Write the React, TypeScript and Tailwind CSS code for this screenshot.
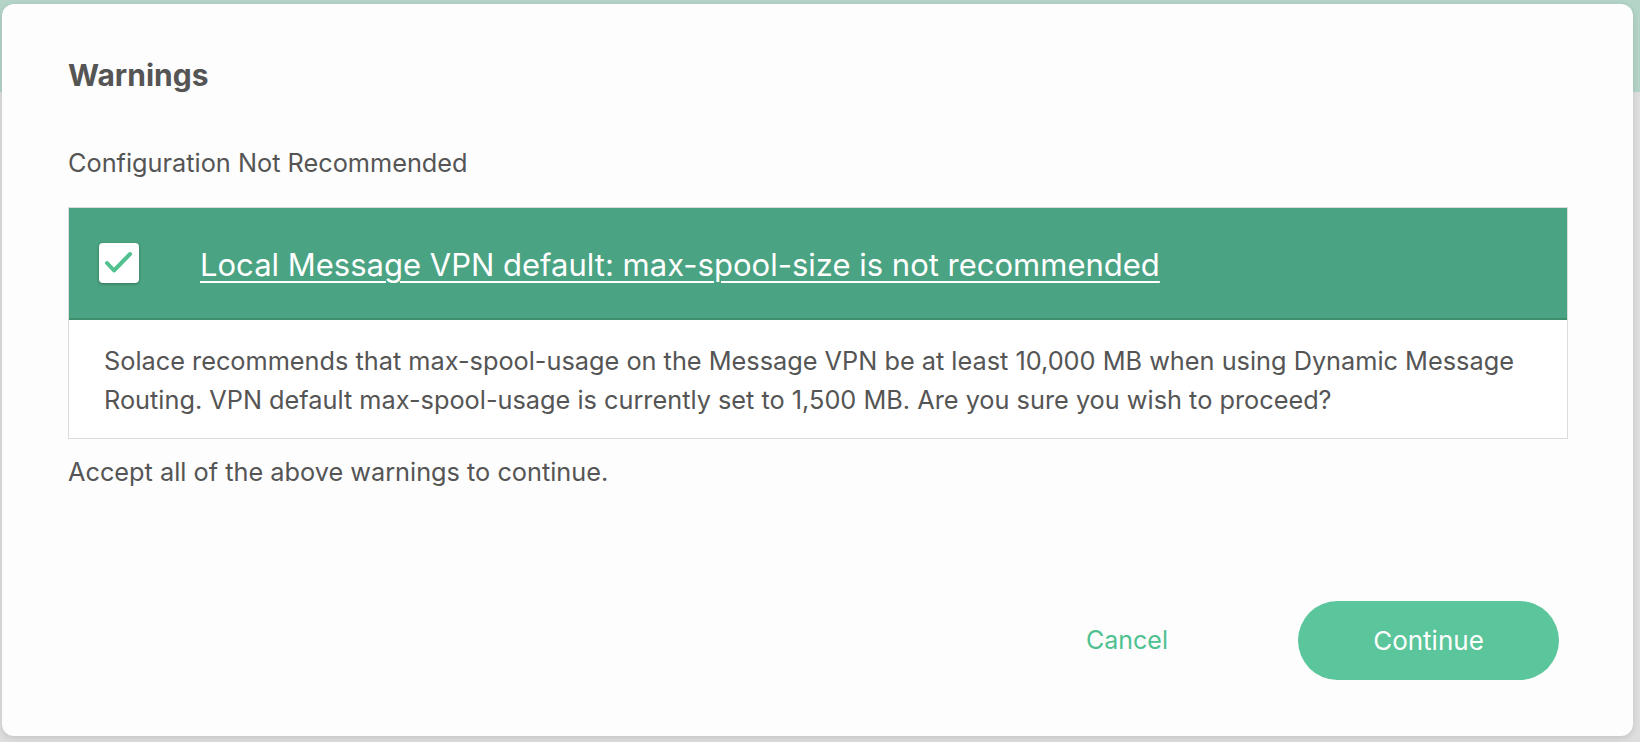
import { useState } from "react";

export default function App() {
  const [accepted, setAccepted] = useState(true);

  return (
    <div className="h-[742px] w-[1640px] overflow-hidden bg-[linear-gradient(to_bottom,#b4d4c7_0,#b4d4c7_92px,#dedede_92px)] pl-[2px] pr-[7px] pt-[4px] pb-[6px] font-['Inter','Liberation_Sans',sans-serif]">
      <div className="flex h-full flex-col rounded-[12px] bg-[#fdfdfd] pl-[66px] pr-[65px] pt-[53px] shadow-[0_2px_6px_rgba(0,0,0,0.12)]">
        <h2 className="text-[30px] font-bold leading-[36px] text-[#555555]">Warnings</h2>

        <p className="mt-[54px] text-[25.3px] leading-[32px] text-[#555555]">Configuration Not Recommended</p>

        <div className="mt-[28px] border border-[#dcdcdc]">
          <div className="flex h-[112px] items-center border-b-2 border-[#3f8e6e] bg-[#4aa382] pl-[30px]">
            <button
              onClick={() => setAccepted(!accepted)}
              className="flex h-[40px] w-[40px] items-center justify-center rounded-[4px] bg-white shadow-[0_1px_3px_rgba(0,0,0,0.3)]"
            >
              {accepted && (
                <svg width="40" height="40" viewBox="0 0 40 40" fill="none">
                  <path d="M8 20 L15 27.5 L31 11" stroke="#52c08f" strokeWidth="4" strokeLinecap="round" strokeLinejoin="round" />
                </svg>
              )}
            </button>
            <a href="#" className="ml-[61px] mt-[4px] text-[31px] leading-[36px] text-white underline decoration-2 underline-offset-[5px]">
              Local Message VPN default: max-spool-size is not recommended
            </a>
          </div>
          <div className="bg-white px-[35px] pt-[21px] pb-[19px]">
            <p className="text-[25.3px] leading-[39px] text-[#555555]">
              Solace recommends that max-spool-usage on the Message VPN be at least 10,000 MB when using Dynamic Message
              Routing. VPN default max-spool-usage is currently set to 1,500 MB. Are you sure you wish to proceed?
            </p>
          </div>
        </div>

        <p className="mt-[17px] text-[25.3px] leading-[32px] text-[#555555]">Accept all of the above warnings to continue.</p>

        <div className="mt-auto mb-[56px] flex items-center justify-end gap-[130px] pr-[9px]">
          <button className="text-[25px] text-[#4fc191]">Cancel</button>
          <button className="h-[79px] w-[261px] rounded-full bg-[#5bc59b] text-[26px] text-white">Continue</button>
        </div>
      </div>
    </div>
  );
}
